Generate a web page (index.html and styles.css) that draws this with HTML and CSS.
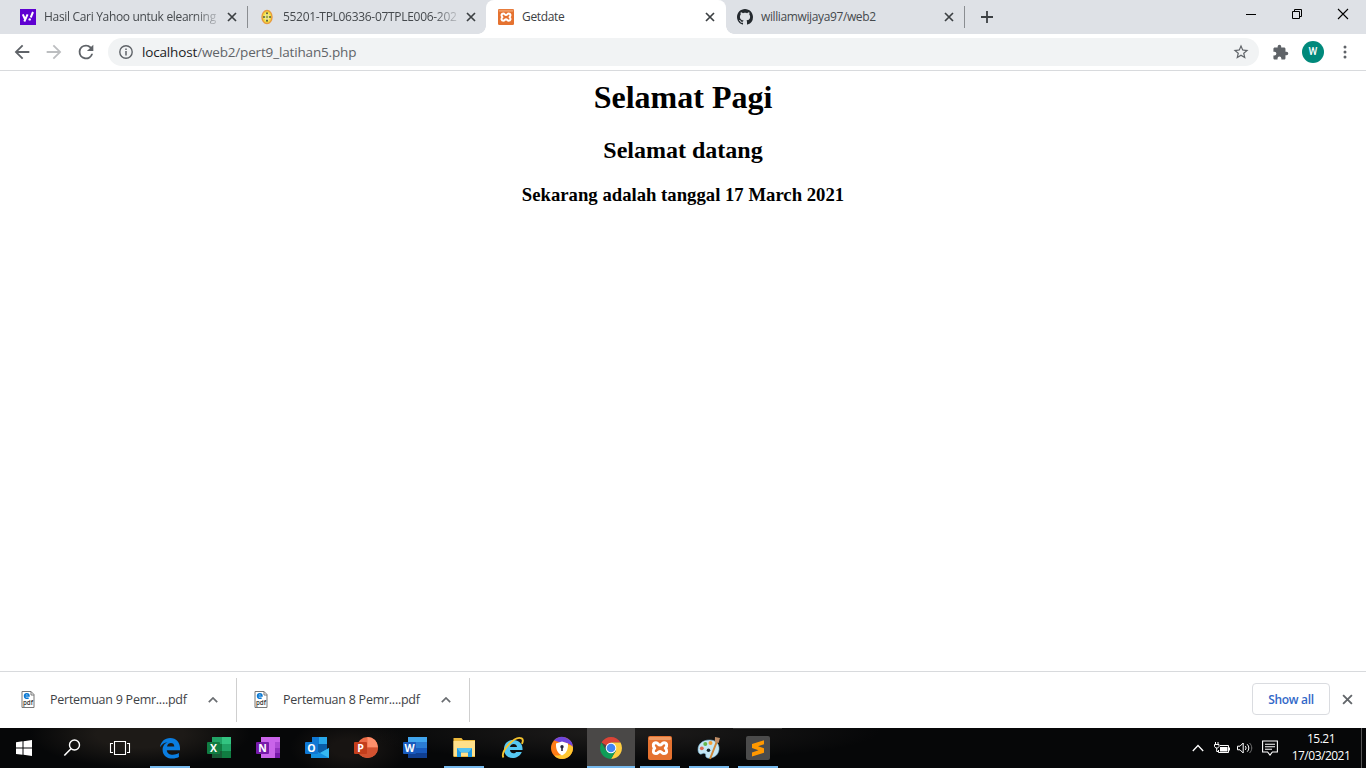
FILE: index.html
```html
<!DOCTYPE html>
<html lang="id">
<head>
<meta charset="utf-8">
<title>Getdate</title>
<link rel="stylesheet" href="styles.css">
</head>
<body>
<svg class="defs" width="0" height="0" aria-hidden="true">
  <symbol id="close" viewBox="0 0 10 10"><path d="M1 1l8 8M9 1L1 9" fill="none" stroke="currentColor" stroke-width="1.7"/></symbol>
  <symbol id="xampp" viewBox="0 0 24 24">
    <rect width="24" height="24" rx="2" fill="#e57230"/><rect x="1" y="1" width="22" height="3" rx="1" fill="#f09a62"/>
    <path d="M8 6.800c2.200 0 2 2.200 4 2.200s1.800-2.200 4-2.200c3 0 3.600 3.200 1.300 5.400 2.300 2.200 1.700 5.400-1.300 5.400-2.200 0-2-2.200-4-2.200s-1.800 2.200-4 2.200c-3 0-3.600-3.200-1.300-5.400C4.400 10 5 6.800 8 6.800z" fill="#e57230" stroke="#fff" stroke-width="3" stroke-linejoin="round"/>
  </symbol>
  <symbol id="pdf" viewBox="0 0 14 17">
    <path d="M1 .5h9l3 3v13H1z" fill="#fff" stroke="#777"/><path d="M10 .5V4h3" fill="none" stroke="#777"/>
    <path d="M3.500 5h4.500c0-3-4.400-3-4.500 0 0 2.600 2.700 2.700 4.100 1.800" fill="none" stroke="#0878d4" stroke-width="1.500"/>
    <text x="2" y="13.500" font-size="6.500" font-weight="600" fill="#333" textLength="10" lengthAdjust="spacingAndGlyphs">pdf</text>
  </symbol>
  <symbol id="chevron" viewBox="0 0 10 6"><path d="M.8 5.200L5 1l4.200 4.200" fill="none" stroke="currentColor" stroke-width="1.700"/></symbol>
</svg>

<header class="tabstrip">
  <div class="tab">
    <svg class="favicon" viewBox="0 0 16 16"><rect width="16" height="16" fill="#5f01d1"/><path d="M2.800 5.300l2.300 5M7.600 5.300L4.300 12.500M13 3L10.700 8.500" stroke="#fff" stroke-width="2" fill="none"/><circle cx="9.700" cy="10.400" r="1.200" fill="#fff"/></svg>
    <span class="title fade t1">Hasil Cari Yahoo untuk elearning</span>
    <svg class="close"><use href="#close"/></svg>
  </div>
  <div class="tab">
    <svg class="favicon" viewBox="0 0 16 16"><ellipse cx="8" cy="8" rx="5" ry="6.500" fill="#f3df3e" stroke="#e89b3f" stroke-width="1.400"/><path d="M8 4v8M5 8h6" stroke="#f8efad" stroke-width="3"/><g fill="#5d6440"><circle cx="8" cy="4.300" r="1.100"/><circle cx="8" cy="11.700" r="1.100"/><circle cx="5" cy="8" r="1.100"/><circle cx="11" cy="8" r="1.100"/></g><circle cx="8" cy="8" r="1.400" fill="#a5b13c"/></svg>
    <span class="title fade t2">55201-TPL06336-07TPLE006-202</span>
    <svg class="close"><use href="#close"/></svg>
  </div>
  <div class="tab active">
    <svg class="favicon"><use href="#xampp"/></svg>
    <span class="title t3">Getdate</span>
    <svg class="close"><use href="#close"/></svg>
  </div>
  <div class="tab">
    <svg class="favicon" viewBox="0 0 16 16"><path fill="#24292e" fill-rule="evenodd" d="M8 0C3.580 0 0 3.580 0 8c0 3.540 2.290 6.530 5.470 7.590.4.070.55-.17.55-.38 0-.19-.01-.82-.01-1.490-2.010.37-2.530-.49-2.690-.94-.09-.23-.48-.94-.82-1.130-.28-.15-.68-.52-.01-.53.63-.01 1.080.58 1.230.82.72 1.210 1.870.87 2.330.66.07-.52.28-.87.51-1.070-1.780-.2-3.640-.89-3.640-3.950 0-.87.31-1.590.82-2.150-.08-.2-.36-1.020.08-2.120 0 0 .67-.21 2.200.82.64-.18 1.320-.27 2-.27s1.360.09 2 .27c1.530-1.040 2.200-.82 2.200-.82.44 1.100.16 1.920.08 2.120.51.56.82 1.270.82 2.150 0 3.070-1.870 3.750-3.650 3.950.29.25.54.73.54 1.480 0 1.070-.01 1.930-.01 2.200 0 .21.15.46.55.38A8.010 8.010 0 0016 8c0-4.420-3.580-8-8-8z"/></svg>
    <span class="title t4">williamwijaya97/web2</span>
    <svg class="close"><use href="#close"/></svg>
  </div>
  <svg class="newtab" viewBox="0 0 12 12"><path d="M6 0v12M0 6h12" stroke="#3c4043" stroke-width="1.800"/></svg>
  <div class="winbtns">
    <svg viewBox="0 0 46 30"><path d="M18 14.500h10" stroke="#000"/></svg>
    <svg viewBox="0 0 46 30"><path d="M18.500 11.500h7v7h-7zM20.500 11.500v-2h7v7h-2" fill="none" stroke="#000"/></svg>
    <svg viewBox="0 0 46 30"><path d="M18 9l10 10M28 9L18 19" stroke="#000" stroke-width="1.100"/></svg>
  </div>
</header>

<nav class="toolbar">
  <svg class="nav" viewBox="0 0 24 24"><path fill="#5f6368" d="M20 11H7.830l5.590-5.590L12 4l-8 8 8 8 1.410-1.410L7.830 13H20v-2z"/></svg>
  <svg class="nav" viewBox="0 0 24 24"><path fill="#bcbec0" d="M12 4l-1.410 1.410L16.170 11H4v2h12.170l-5.580 5.590L12 20l8-8z"/></svg>
  <svg class="nav" viewBox="0 0 24 24"><path fill="#5f6368" d="M17.650 6.350A7.960 7.960 0 0012 4a8 8 0 107.730 10h-2.080A6 6 0 1112 6c1.660 0 3.140.69 4.220 1.780L13 11h7V4l-2.350 2.350z"/></svg>
  <div class="omnibox">
    <svg class="info" viewBox="0 0 14 14"><circle cx="7" cy="7" r="6.200" fill="none" stroke="#5f6368" stroke-width="1.400"/><path d="M7 6v4.500M7 3.500V5" stroke="#5f6368" stroke-width="1.500"/></svg>
    <span class="url"><b>localhost</b>/web2/pert9_latihan5.php</span>
    <svg class="star" viewBox="0 0 24 24"><path fill="#5f6368" d="M22 9.240l-7.190-.62L12 2 9.190 8.630 2 9.240l5.460 4.730L5.820 21 12 17.270 18.180 21l-1.630-7.030L22 9.240zM12 15.400l-3.760 2.270 1-4.280-3.320-2.880 4.380-.38L12 6.100l1.710 4.040 4.380.38-3.320 2.880 1 4.280L12 15.400z"/></svg>
  </div>
  <svg class="puzzle" viewBox="0 0 24 24"><path fill="#5f6368" d="M20.500 11H19V7c0-1.100-.9-2-2-2h-4V3.500a2.500 2.500 0 00-5 0V5H4c-1.100 0-2 .9-2 2v3.800h1.500a2.700 2.700 0 010 5.400H2V20c0 1.100.9 2 2 2h3.800v-1.500a2.700 2.700 0 015.400 0V22H17c1.100 0 2-.9 2-2v-4h1.500a2.500 2.500 0 000-5z"/></svg>
  <span class="avatar">W</span>
  <svg class="more" viewBox="0 0 4 14"><circle cx="2" cy="2" r="1.500"/><circle cx="2" cy="7" r="1.500"/><circle cx="2" cy="12" r="1.500"/></svg>
</nav>

<main class="page">
  <h1>Selamat Pagi</h1>
  <h2>Selamat datang</h2>
  <h3>Sekarang adalah tanggal 17 March 2021</h3>
</main>

<section class="downloads">
  <div class="item"><svg class="file"><use href="#pdf"/></svg><span>Pertemuan 9 Pemr....pdf</span><svg class="chev"><use href="#chevron"/></svg></div>
  <div class="item"><svg class="file"><use href="#pdf"/></svg><span>Pertemuan 8 Pemr....pdf</span><svg class="chev"><use href="#chevron"/></svg></div>
  <button class="showall">Show all</button>
  <svg class="dismiss"><use href="#close"/></svg>
</section>

<footer class="taskbar">
  <div class="sys"><svg viewBox="0 0 24 24"><path fill="#fff" d="M4 6.300l6.500-1v6.200H4zM11.500 5.200L20 4v7.500h-8.500zM4 12.500h6.500v6.300L4 17.900zM11.500 12.500H20V20l-8.500-1.200z"/></svg></div>
  <div class="sys"><svg viewBox="0 0 24 24"><circle cx="14.500" cy="9" r="5" fill="none" stroke="#fff" stroke-width="1.400"/><path d="M11 12.800L4.300 19.500" stroke="#fff" stroke-width="1.600"/></svg></div>
  <div class="sys"><svg viewBox="0 0 24 24"><path d="M6.500 5.500h11v13h-11zM5 7.500H2.500v9H5M19 7.500h2.500v9H19" fill="none" stroke="#fff" stroke-width="1.100"/></svg></div>
  <div class="apps">
    <div class="app open"><svg viewBox="0 0 24 24"><path fill="#0a7de0" d="M2 11.300C2.800 5.700 6.600 2 12.200 2 18.400 2 22 6.600 22 12v2.200H8.800c.3 5.100 7.300 5.700 12.100 2.900v4c-6.700 3.400-16.300.9-16.300-7.200 0-4 2.300-6.600 5.300-7.800-3.900.4-6.300 2.700-7.900 5.200zM9 10.400h7.300c0-4.700-6.600-4.500-7.300 0z"/></svg></div>
    <div class="app"><svg viewBox="0 0 24 24"><path fill="#21a366" d="M5 1h19v21H5z"/><path fill="#33c481" d="M15 1h9v7h-9z"/><path fill="#107c41" d="M5 8h10v7H5z"/><path fill="#185c37" d="M5 15h10v7H5z"/><path fill="#107c41" d="M15 15h9v7h-9z"/><rect y="6" width="13" height="12" rx="1" fill="#107c41"/><text class="letter" x="6.500" y="15.700">X</text></svg></div>
    <div class="app"><svg viewBox="0 0 24 24"><path fill="#ca64ea" d="M5 1h19v21H5z"/><path fill="#ae4bd5" d="M19 6h5v6h-5z"/><path fill="#9332bf" d="M19 12h5v5h-5z"/><path fill="#7719aa" d="M19 17h5v5h-5z"/><rect y="6" width="13" height="12" rx="1" fill="#7719aa"/><text class="letter" x="6.500" y="15.700">N</text></svg></div>
    <div class="app"><svg viewBox="0 0 24 24"><path fill="#0a5ea8" d="M7 1h15v20H7z"/><path fill="#0f78d4" d="M7 1h7v7H7z"/><path fill="#28a8ea" d="M14 1h8v7h-8z"/><path fill="#1490df" d="M6 12l9 5 9-5v10H6z"/><path fill="#35b8f1" d="M24 12v10l-9-5z"/><rect y="6" width="13" height="12" rx="1" fill="#0f78d4"/><text class="letter" x="6.500" y="15.700">O</text></svg></div>
    <div class="app"><svg viewBox="0 0 24 24"><circle cx="13.500" cy="11.500" r="10.500" fill="#ed6c47"/><path fill="#ff8f6b" d="M13.500 1A10.500 10.500 0 0124 11.500H13.500z"/><path fill="#d35230" d="M24 11.500a10.500 10.500 0 01-21 0z"/><rect y="6" width="13" height="12" rx="1" fill="#c43e1c"/><text class="letter" x="6.500" y="15.700">P</text></svg></div>
    <div class="app"><svg viewBox="0 0 24 24"><path fill="#41a5ee" d="M5 1h19v5H5z"/><path fill="#2b7cd3" d="M5 6h19v6H5z"/><path fill="#185abd" d="M5 12h19v5H5z"/><path fill="#103f91" d="M5 17h19v5H5z"/><rect y="6" width="13" height="12" rx="1" fill="#185abd"/><text class="letter" x="6.500" y="15.700">W</text></svg></div>
    <div class="app open"><svg viewBox="0 0 24 24"><path fill="#edb93c" d="M1.500 2h8l1.500 2H23v17H1.500z"/><path fill="#ffe08a" d="M1.500 5H23v15H1.500z"/><path fill="#1e9be5" d="M5 12h15v9h-4v-4.500H9V21H5z"/><path fill="#55c3f1" d="M5 12h15l-3 4H8z"/></svg></div>
    <div class="app"><svg viewBox="0 0 24 24"><path fill="#55c8f2" d="M3 13C3 7.500 7 4 12.500 4S22 8 21.500 14H9c.4 4 5 4 6.200 1.900h5.600C17 25 3 24 3 13zm6-2h7c-.2-4-6.400-4-7 0z"/><path d="M2.500 21.500C-1.500 16 14-1 20.600 2.400c1.600.9 1.500 3 .3 5.400" fill="none" stroke="#f5c42e" stroke-width="1.900"/></svg></div>
    <div class="app"><svg viewBox="0 0 24 24"><circle cx="12" cy="12" r="11" fill="#ff7c18"/><path fill="#7047dc" d="M4 4.300A11 11 0 0123 12c-2-5-7.500-6-13-5.500z"/><path fill="#ffc730" d="M23 11c.5 7-5 12-11 12-3 0-6-1.500-7.500-3.500C12 20 17 17 18 9c2-.2 4 .5 5 2z"/><path fill="#fff" d="M12 5.500l6 2c.3 6-1.500 9.500-6 12-4.500-2.500-6.300-6-6-12z"/><circle cx="12" cy="10.800" r="1.700" fill="#27253d"/><path d="M12 11v4" stroke="#27253d" stroke-width="1.600"/></svg></div>
    <div class="app current"><svg viewBox="0 0 24 24"><path fill="#db4437" d="M12 12L2.500 6.500a11 11 0 0119 0H12z"/><path fill="#ffcd40" d="M12 6.500h9.500A11 11 0 0112 23l4.800-8.200z"/><path fill="#0f9d58" d="M2.500 6.500A11 11 0 0012 23l4.800-8.200L12 12l-4.800 2.800z"/><circle cx="12" cy="12" r="5.300" fill="#fff"/><circle cx="12" cy="12" r="4.300" fill="#4285f4"/></svg></div>
    <div class="app open"><svg><use href="#xampp"/></svg></div>
    <div class="app open"><svg viewBox="0 0 24 24"><path fill="#c5e7f5" stroke="#78b6d3" stroke-width=".6" d="M12.500 4C5.500 4 1 8 1 13.500 1 17 3 19 5 17.800c2-1.200 4.300-.6 3.700 2 0 2 2 2.700 5 2.200C19 21 22.500 17 22 11.500 21.600 7 18 4 12.500 4z"/><circle cx="4.800" cy="12.300" r="1.900" fill="#de6752"/><circle cx="8.300" cy="8" r="2" fill="#64b64c"/><circle cx="13.500" cy="7" r="2" fill="#f19f3a"/><circle cx="11.500" cy="14.300" r="1.800" fill="#17272c"/><path d="M19.700 6L13 23" stroke="#cf8739" stroke-width="2"/><path fill="#bf8d67" d="M18 1l5 1-1.500 5-3.700-.8z"/></svg></div>
    <div class="app open stacked"><svg viewBox="0 0 24 24"><rect width="24" height="24" rx="2" fill="#4b4b4b"/><path fill="#ff9800" d="M18 4.300v4L12 10.300l6 2v4.400L6 20.500v-4l6.500-2.200L6 12V8z"/></svg></div>
  </div>
  <div class="tray">
    <svg class="traychev" viewBox="0 0 12 8"><path d="M.8 7L6 1.500 11.200 7" fill="none" stroke="#fff" stroke-width="1.300"/></svg>
    <svg class="battery" viewBox="0 0 16 12"><path d="M6 3.500h8.500v7h-10V8" fill="none" stroke="#fff"/><path d="M14.500 5.500h1.500v3h-1.500M6 5h7.500v4.500H6z" fill="#fff"/><path d="M1.500 0v2.500M4 0v2.500M.5 2.500h4.500v2L3.700 6H1.800L.5 4.500zM2.700 6v3.500h1.500" fill="none" stroke="#fff"/></svg>
    <svg class="volume" viewBox="0 0 16 12"><path d="M.5 4.200h2.500L6.200 1v10L3 7.800H.5z" fill="none" stroke="#fff"/><path d="M8.200 4c1.100 1 1.100 3 0 4M10.200 2.300c2.100 2 2.100 5.400 0 7.400" fill="none" stroke="#fff"/><path d="M12.500 1c3 3 3 7 0 10" fill="none" stroke="#777"/></svg>
    <svg class="notice" viewBox="0 0 16 16"><path d="M.6 1h14.800v11h-5l-2.400 3-2.400-3h-5zM3 4.200h10M3 6.700h10M3 9.200h7" fill="none" stroke="#fff" stroke-width="1.100"/></svg>
    <div class="clock"><span class="time">15.21</span><span class="date">17/03/2021</span></div>
  </div>
</footer>
</body>
</html>
```
FILE: styles.css
```css
* { box-sizing: border-box; }
body {
  margin: 0;
  height: 768px;
  overflow: hidden;
  display: flex;
  flex-direction: column;
  background: #fff;
  font-family: "Open Sans", "Noto Sans", sans-serif;
}
svg { display: block; flex: none; }
.defs { position: absolute; }

/* Tab strip */
.tabstrip {
  height: 34px;
  flex: none;
  display: flex;
  align-items: stretch;
  padding-left: 8px;
  background: #dee1e6;
}
.tab {
  position: relative;
  width: 240px;
  margin-right: -1px;
  flex: none;
  display: flex;
  align-items: center;
  padding: 0 10px 0 12px;
  color: #45494d;
  border-right: 1px solid transparent;
  border-image: linear-gradient(transparent 7px, #8a8d91 7px 27px, transparent 27px) 1;
}
.tab:has(+ .active) { border-image: none; }
.tab.active {
  background: #fff;
  border-radius: 8px 8px 0 0;
  border-image: none;
  border-right-color: #fff;
  color: #3c4043;
}
.tab.active::before,
.tab.active::after {
  content: "";
  position: absolute;
  bottom: 0;
  width: 8px;
  height: 8px;
}
.tab.active::before { left: -8px; background: radial-gradient(circle at 0 0, transparent 7.5px, #fff 8px); }
.tab.active::after { right: -9px; background: radial-gradient(circle at 100% 0, transparent 7.5px, #fff 8px); }
.favicon { width: 16px; height: 16px; }
.title {
  width: 175px;
  margin-left: 8px;
  white-space: nowrap;
  font-size: 12px;
  line-height: 18px;
}
.fade {
  -webkit-mask-image: linear-gradient(90deg, #000 150px, transparent 180px);
  mask-image: linear-gradient(90deg, #000 150px, transparent 180px);
}
.t1 { letter-spacing: -.32px; }
.t2 { letter-spacing: -.3px; }
.t3 { letter-spacing: -.33px; }
.t4 { letter-spacing: -.38px; }
.close { width: 10px; height: 10px; margin-left: 9px; color: #3c4043; }
.newtab { width: 12px; height: 12px; align-self: center; margin-left: 17px; }
.winbtns { margin-left: auto; display: flex; }
.winbtns svg { width: 46px; height: 30px; }

/* Toolbar */
.toolbar {
  height: 37px;
  flex: none;
  display: flex;
  align-items: center;
  padding: 0 20px 0 11px;
  border-bottom: 1px solid #d8dadd;
}
.nav { width: 22px; height: 22px; margin-right: 10px; }
.omnibox {
  flex: 1;
  height: 28px;
  margin-left: 1px;
  border-radius: 14px;
  background: #f1f3f4;
  display: flex;
  align-items: center;
  padding: 0 9px 0 11px;
}
.info { width: 14px; height: 14px; }
.url { flex: 1; margin-left: 9px; font-size: 13.5px; line-height: 20px; letter-spacing: -.16px; color: #5f6368; }
.url b { font-weight: 400; color: #202124; }
.star { width: 18px; height: 18px; }
.puzzle { width: 17px; height: 17px; margin-left: 13px; }
.avatar {
  width: 22px;
  height: 22px;
  margin: 0 17px 0 13px;
  border-radius: 50%;
  background: #00897b;
  color: #fff;
  text-align: center;
  font: 500 10px/22px Roboto, sans-serif;
}
.more { width: 4px; height: 14px; margin-left: 2px; margin-right: -1px; fill: #5f6368; }

/* Page content */
.page {
  flex: 1;
  padding-top: 8px;
  text-align: center;
  color: #000;
  font-family: "Liberation Serif", serif;
}
.page h1 { margin: 0 0 21px; font-size: 32px; line-height: 37px; }
.page h2 { margin: 0 0 20px; font-size: 24px; line-height: 27px; }
.page h3 { margin: 0; font-size: 18.72px; line-height: 22px; }

/* Download shelf */
.downloads {
  height: 57px;
  flex: none;
  display: flex;
  align-items: center;
  padding-right: 13px;
  border-top: 1px solid #d8dadd;
}
.item {
  width: 233px;
  height: 44px;
  display: flex;
  align-items: center;
  padding-left: 17px;
  border-right: 1px solid #cfcfcf;
  color: #3e4246;
  font-size: 12.5px;
}
.item:first-child { width: 237px; padding-left: 21px; }
.item span { width: 140px; margin-left: 15px; white-space: nowrap; letter-spacing: -.25px; line-height: 20px; }
.file { width: 14px; height: 17px; margin-top: -2px; }
.chev { width: 10px; height: 6px; margin-left: 18px; color: #696c70; }
.showall {
  width: 78px;
  height: 32px;
  margin-left: auto;
  margin-top: -2px;
  padding: 0;
  border: 1px solid #dadce0;
  border-radius: 4px;
  background: #fff;
  color: #3268c8;
  font: 600 12px "Open Sans", sans-serif;
  letter-spacing: -.3px;
}
.dismiss { width: 11px; height: 11px; margin: -2px 0 0 12px; color: #62666a; }

/* Taskbar */
.taskbar {
  height: 40px;
  flex: none;
  display: flex;
  background:
    radial-gradient(ellipse 260px 30px at 620px 4px, #1f1d1c 0, transparent),
    radial-gradient(ellipse 110px 34px at 140px 6px, #1d1a17 40%, transparent),
    radial-gradient(ellipse 60px 30px at 350px 20px, #171412 30%, transparent),
    #060708;
}
.sys { width: 48px; display: grid; place-items: center; }
.sys svg, .app svg { width: 24px; height: 24px; }
.apps { display: flex; margin-left: 1px; }
.app {
  position: relative;
  width: 49px;
  display: grid;
  place-items: center;
}
.open::after, .current::after {
  content: "";
  position: absolute;
  bottom: 0;
  left: 5px;
  width: 40px;
  height: 2px;
  background: #76b9ed;
}
.current { background: linear-gradient(90deg, transparent 1px, #4a4847 1px); }
.current::after { left: 1px; width: 48px; }
.stacked { background: linear-gradient(#353535 1px, transparent 1px); }
.letter { font: 700 10.5px "Open Sans", sans-serif; fill: #fff; text-anchor: middle; }
.tray { margin-left: auto; display: flex; align-items: center; padding-right: 4px; }
.traychev { width: 12px; height: 8px; margin-right: 10px; }
.battery { width: 16px; height: 12px; margin-right: 7px; }
.volume { width: 16px; height: 12px; margin-right: 9px; }
.notice { width: 16px; height: 16px; margin-right: 8px; }
.clock {
  width: 70px;
  margin: -2px 5px 0 0;
  display: flex;
  flex-direction: column;
  align-items: center;
  color: #fff;
  font-size: 12px;
  line-height: 17px;
  letter-spacing: -.5px;
}
.tray::after { content: ""; width: 1px; height: 40px; background: #555; }
```
